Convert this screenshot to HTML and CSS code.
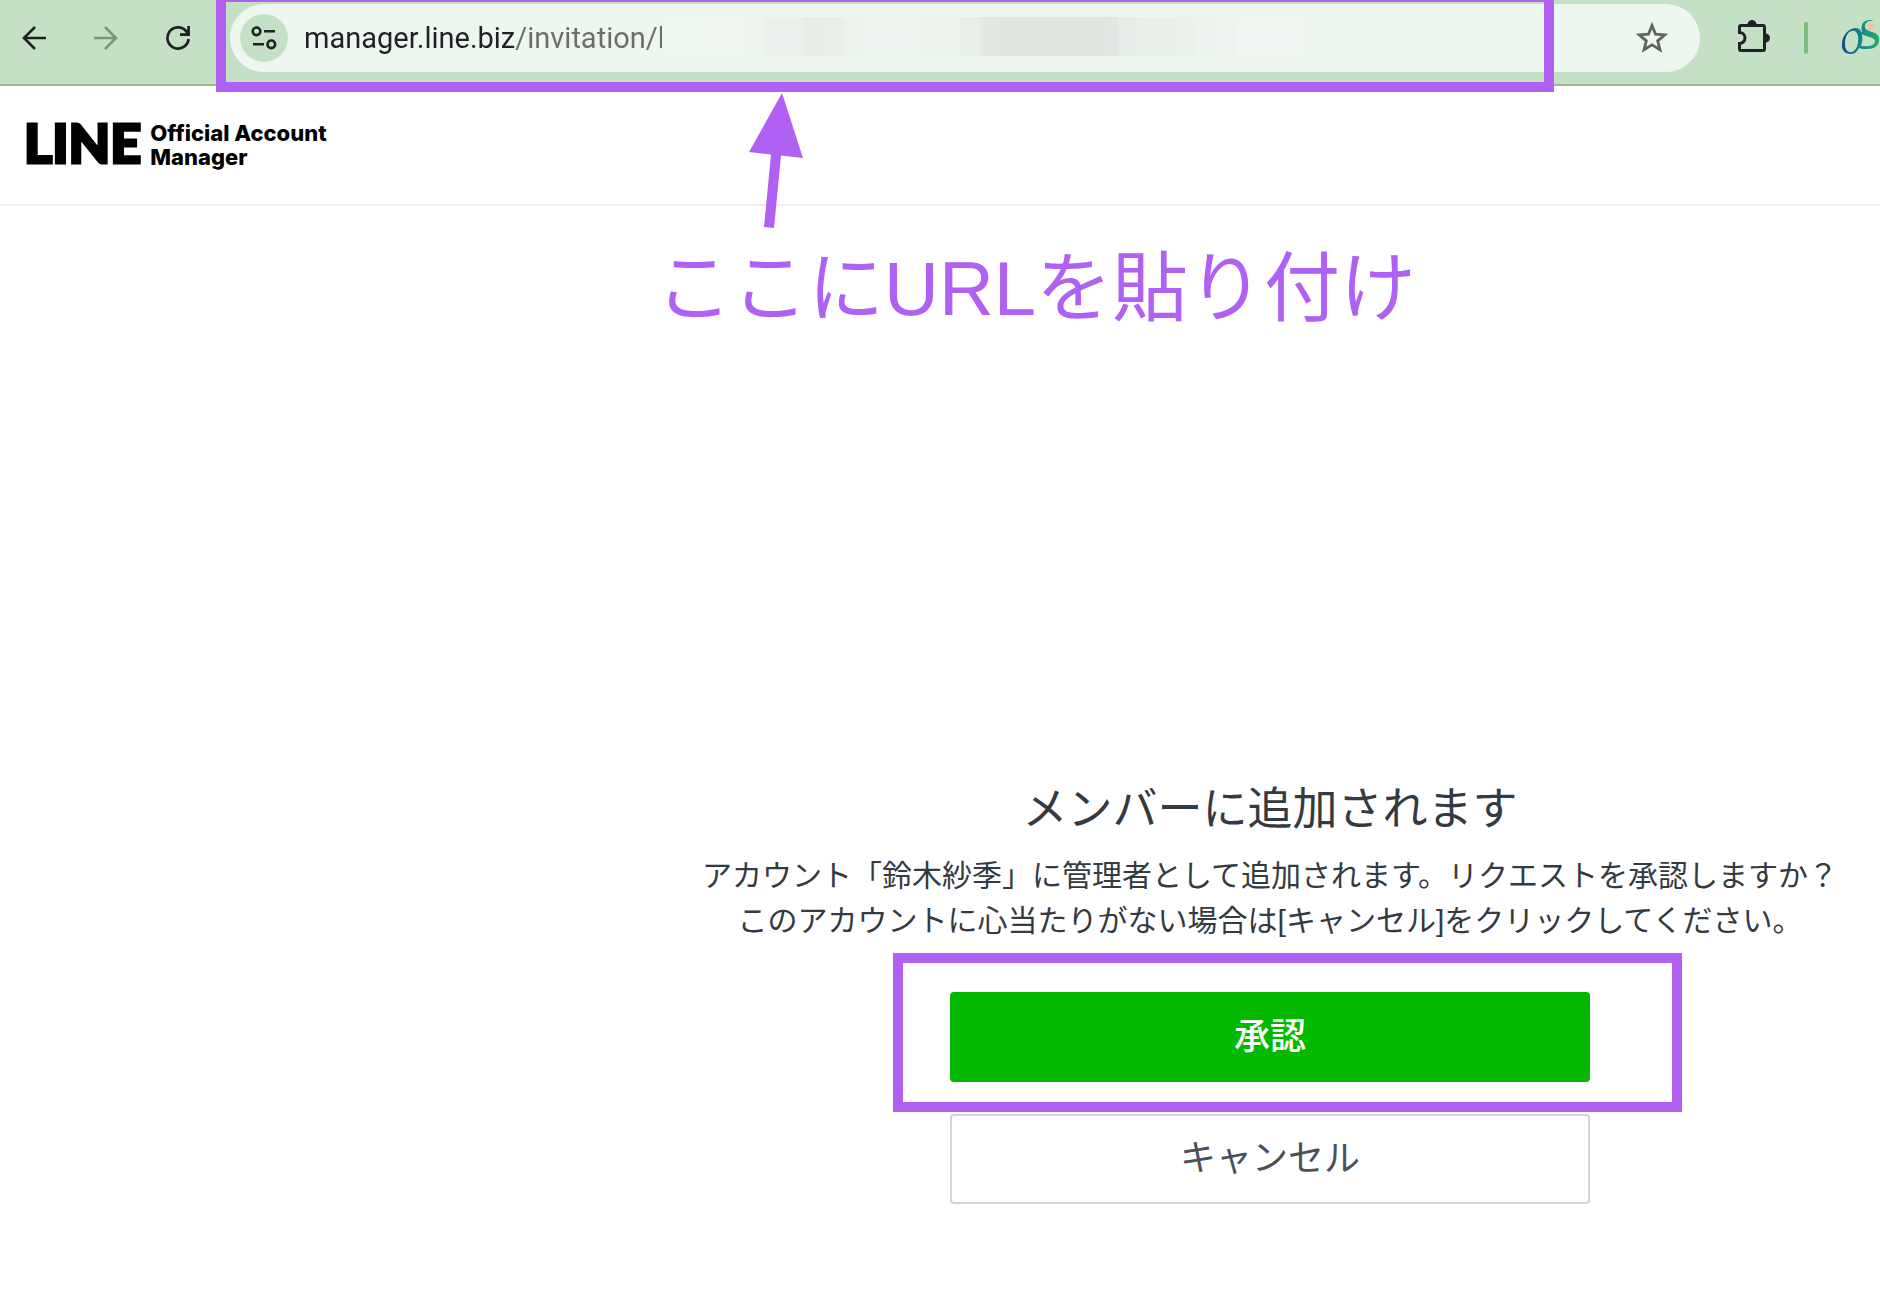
FILE: index.html
```
<!DOCTYPE html>
<html lang="ja">
<head>
<meta charset="UTF-8">
<meta name="viewport" content="width=device-width, initial-scale=1.0">
<title>LINE Official Account Manager</title>
<link rel="stylesheet" href="styles.css">
</head>
<body>
<div class="toolbar">
  <button class="nav-btn" type="button" aria-label="戻る">
    <svg width="24" height="24" viewBox="0 0 24 24"><path d="M24 12H2M13 1L2 12l11 11" fill="none" stroke="currentColor" stroke-width="2.6"/></svg>
  </button>
  <button class="nav-btn" type="button" aria-label="進む" disabled>
    <svg width="24" height="24" viewBox="0 0 24 24"><path d="M0 12h22M11 1l11 11-11 11" fill="none" stroke="currentColor" stroke-width="2.6"/></svg>
  </button>
  <button class="nav-btn" type="button" aria-label="再読み込み">
    <svg width="24" height="24" viewBox="0 0 24 24"><path d="M22.6 13A10.6 10.6 0 1 1 20 5l2 3.4M22.6 0v8.6H14" fill="none" stroke="currentColor" stroke-width="2.7"/></svg>
  </button>
  <div class="omnibox">
    <button class="site-info" type="button" aria-label="サイト情報">
      <svg width="26" height="26" viewBox="0 0 26 26" fill="none" stroke="currentColor" stroke-width="2.6"><circle cx="5.5" cy="6.3" r="3.8"/><path d="M13 6.3h11M2 19.3h11"/><circle cx="20.3" cy="19.3" r="3.8"/></svg>
    </button>
    <input class="url" type="text" aria-label="アドレス" value="manager.line.biz/invitation/l" spellcheck="false">
    <div class="mosaic"></div>
    <button class="star" type="button" aria-label="ブックマーク">
      <svg width="32" height="32" viewBox="0 0 32 32"><path d="M16 3.5l3.5 8.6 9.4.7-7.2 6 2.3 9-8-4.9-8 4.9 2.3-9-7.2-6 9.4-.7z" fill="none" stroke="currentColor" stroke-width="2.8"/></svg>
    </button>
  </div>
  <button class="ext" type="button" aria-label="拡張機能">
    <svg width="34" height="36" viewBox="0 0 34 36"><path d="M5 5.5h22q1.5 0 1.5 1.5v22q0 1.5-1.5 1.5H5q-1.5 0-1.5-1.5v-5.5a5.5 5.5 0 0 0 0-11V7q0-1.5 1.5-1.5z" fill="none" stroke="currentColor" stroke-width="3"/><path d="M11.5 4.5a4.5 4.5 0 0 1 9 0zM29.5 13.5a4.5 4.5 0 0 1 0 9z" fill="currentColor"/></svg>
  </button>
  <span class="divider"></span>
  <svg class="profile" width="39" height="38" viewBox="0 0 39 38">
    <defs><linearGradient id="os" gradientUnits="userSpaceOnUse" x1="0" y1="0" x2="38" y2="0"><stop offset="0" stop-color="#16468f"/><stop offset=".55" stop-color="#138a86"/><stop offset="1" stop-color="#22ab76"/></linearGradient></defs>
    <path fill="url(#os)" fill-rule="evenodd" d="M1 25C1 16 8 9 15 9c5 0 7 5 5 14-2 8-5 12-10 12C4 35 0 31 1 25zM4 25c0 6 3 9 7 8 5-2 7-9 6-16-1-4-3-6-6-5-5 1-7 7-7 13z"/>
    <path fill="url(#os)" fill-rule="evenodd" d="M32 2C27 1 23 5 24 9c3 5 13 3 14 10 1 8-5 11-12 11-3 0-6 0-8-1 2-6 2-10 1-16h2C19 5 23 1 29 1c2 0 3 0 3 1zM21 15c1 5 0 9-1 12 6 1 14 0 14-5 0-4-9-4-13-7z"/>
    <circle cx="30" cy="7" r="3.5" fill="#f1c4a0"/>
  </svg>
  <div class="mark mark-url"></div>
</div>
<header class="header">
  <a class="logo" href="#">
    <span class="logo-line">LINE</span>
    <span class="logo-sub">Official Account<br>Manager</span>
  </a>
</header>
<main class="main">
  <div class="note">
    <svg class="arrow" width="56" height="136" viewBox="0 0 56 136"><path d="M33 0l21 65-22-2.5-7 72.5-10-1 7-72.5L0 59z" fill="currentColor"/></svg>
    <p class="note-text">ここにURLを貼り付け</p>
  </div>
  <section class="invite">
    <h1>メンバーに追加されます</h1>
    <p>アカウント「鈴木紗季」に管理者として追加されます。リクエストを承認しますか？<br>このアカウントに心当たりがない場合は[キャンセル]をクリックしてください。</p>
    <div class="actions">
      <div class="approve">
        <button class="btn btn-primary" type="button">承認</button>
        <div class="mark mark-approve"></div>
      </div>
      <button class="btn btn-cancel" type="button">キャンセル</button>
    </div>
  </section>
</main>
</body>
</html>
```
FILE: styles.css
```
:root {
  --green: #c5e1c5;
  --omnibox: #edf6ef;
  --mark: #b060f2;
  --text: #353a41;
}
* { box-sizing: border-box; }
body { margin: 0; background: #fff; color: var(--text); font-family: "Liberation Sans", "Noto Sans CJK JP", sans-serif; }
button { font-family: inherit; border: 0; padding: 0; background: none; cursor: pointer; }
svg { display: block; }

.mark { position: absolute; border: 10px solid var(--mark); pointer-events: none; }

/* browser bar */
.toolbar {
  position: relative; display: flex; align-items: center; height: 86px; padding: 0 0 8px 22px;
  background: var(--green); border-bottom: 2px solid #9db59d; color: #1f2124;
}
.nav-btn { margin-right: 48px; color: #1f2124; }
.nav-btn:disabled { color: #809381; }
.omnibox {
  position: relative; display: flex; align-items: center; flex: 1; height: 68px; margin-left: -8px;
  padding: 0 32px 0 10px; border-radius: 34px; background: var(--omnibox);
}
.site-info { display: grid; place-items: center; width: 48px; height: 48px; border-radius: 50%; background: var(--green); color: #1f2124; }
.url {
  flex: 1; min-width: 0; height: 48px; margin-left: 16px; padding: 0; border: 0; outline: 0;
  font: 29px Roboto, sans-serif; color: #1f2124;
  background: linear-gradient(to right, #1f2124 211px, #6b6d6c 211px);
  background-clip: text; -webkit-background-clip: text; -webkit-text-fill-color: transparent;
}
/* hides the rest of the address */
.mosaic {
  position: absolute; left: 432px; top: 13px; width: 644px; height: 39px;
  background: linear-gradient(to right,
    #eff7f1 0 40px, #f0f8f1 40px 82px, #eef5ef 82px 103px, #ebf0ec 103px 142px,
    #e8ede8 142px 162px, #e9eeeb 162px 182px, #ecf3ec 182px 202px, #eef5f0 202px 260px,
    #ecf3ec 260px 299px, #e8eee8 299px 318px, #e4e9e5 318px 337px, #e1e6e1 337px 417px,
    #e0e6e0 417px 436px, #e2e7e3 436px 456px, #e6ece8 456px 475px, #e9efe9 475px 515px,
    #ebf1eb 515px 535px, #edf3ee 535px 554px, #eff4f0 554px 573px, #f1f6f3 573px);
}
.star { color: #5f6362; }
.ext { margin-left: 36px; color: #1f2124; }
.divider { width: 4px; height: 32px; margin: 0 33px 0 34px; border-radius: 2px; background: #7dbd7f; }
.mark-url { top: -8px; left: 216px; right: 326px; height: 100px; }

/* site header */
.header { display: flex; align-items: center; height: 120px; padding: 0 24px 4px; border-bottom: 2px solid #efefef; }
.logo { display: flex; align-items: center; gap: 9px; color: #000; text-decoration: none; }
.logo-line { font: 900 54px/56px Lato, sans-serif; -webkit-text-stroke: 3px #000; stroke-linejoin: round; }
.logo-sub { padding-top: 3px; font: 800 22px/24px Inter, sans-serif; }

.main { position: relative; padding: 572px 0 100px 660px; }
.note { position: absolute; left: 656px; top: -113px; color: var(--mark); }
.arrow { margin-left: 93px; }
.note-text { margin: 12px 0 0; font-size: 76px; line-height: 96px; white-space: nowrap; }

/* invitation */
.invite { display: flex; flex-direction: column; align-items: center; text-align: center; }
.invite h1 { margin: 0 0 11px; font-size: 45px; line-height: 64px; font-weight: 400; }
.invite p { margin: 0; font-size: 30px; line-height: 45px; white-space: nowrap; }
.actions { display: flex; flex-direction: column; gap: 32px; width: 640px; margin-top: 49px; }
.approve { position: relative; }
.mark-approve { inset: -39px -92px -30px -57px; }
.btn { display: block; width: 100%; height: 90px; padding-bottom: 8px; border-radius: 4px; font-size: 36px; }
.btn-primary { background: #03b900; color: #fff; font-weight: 500; }
.btn-cancel { border: 2px solid #ced4da; background: #fff; color: #495057; }
```
